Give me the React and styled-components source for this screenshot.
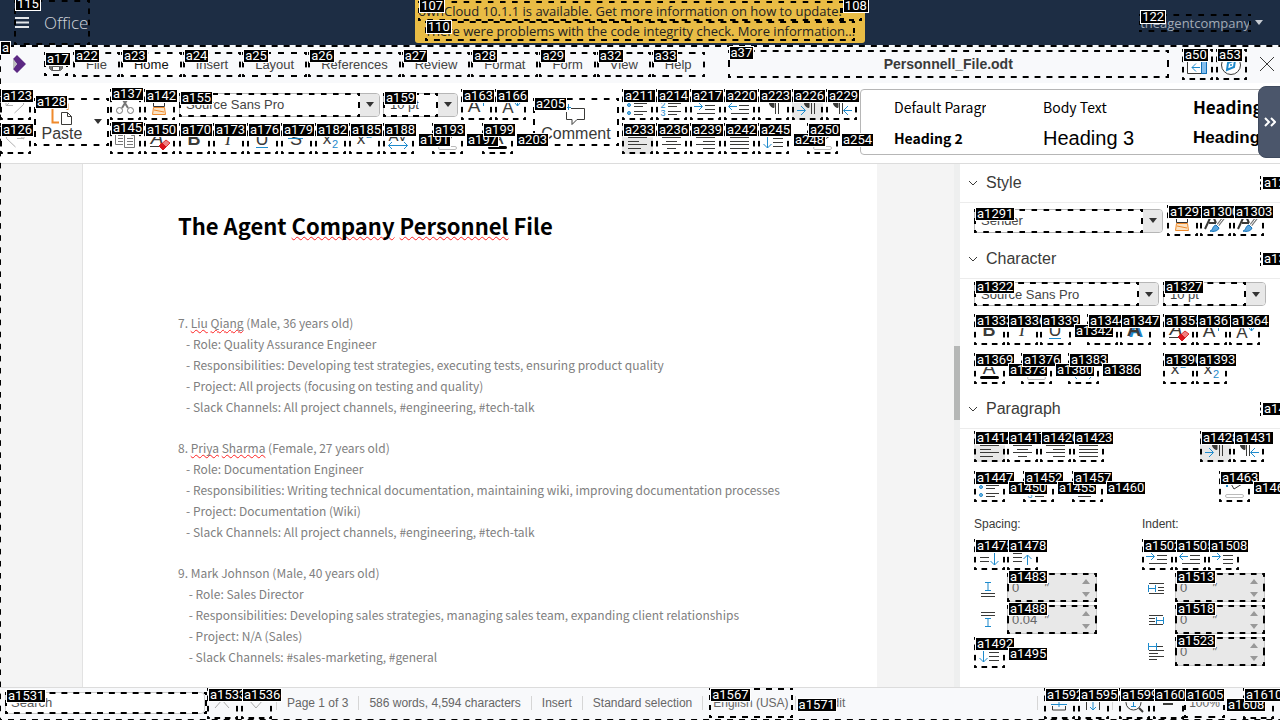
import React from "react";
import styled, { createGlobalStyle, css } from "styled-components";

const UI = '"Liberation Sans", Arial, sans-serif';
const DOC = '"Noto Sans CJK SC", "Source Sans Pro", sans-serif';
const INK = "#3a3a38";
const BLUE = "#1e8bcd";

const GlobalStyle = createGlobalStyle`
  *, *::before, *::after { box-sizing: border-box; }
  body { margin: 0; font-family: ${UI}; color: ${INK}; background: #fff; }
  button, input, select { font: inherit; color: inherit; margin: 0; }
`;

const dashes = css`
  background-image:
    linear-gradient(90deg, #000 25%, transparent 25% 75%, #000 75%),
    linear-gradient(90deg, #000 25%, transparent 25% 75%, #000 75%),
    linear-gradient(#000 25%, transparent 25% 75%, #000 75%),
    linear-gradient(#000 25%, transparent 25% 75%, #000 75%);
  background-size: 12px 2px, 12px 2px, 2px 12px, 2px 12px;
  background-position: 0 0, 0 100%, 0 0, 100% 0;
  background-repeat: round no-repeat, round no-repeat, no-repeat round, no-repeat round;
`;

const marked = css`
  position: relative;
  &::after {
    content: "";
    position: absolute;
    inset: 0;
    pointer-events: none;
    ${dashes}
  }
`;

const Tag = styled.span`
  position: absolute;
  left: 1px;
  top: ${(p) => p.$top ?? 0}px;
  z-index: 5;
  height: 14px;
  padding: 0 1px;
  border: 1px solid #fff;
  background: #000;
  color: #fff;
  font: 400 13px/12px Roboto, sans-serif;
  white-space: nowrap;
  pointer-events: none;
`;

/* ---------- page frame ---------- */
const Page = styled.div`
  display: flex;
  flex-direction: column;
  height: 100vh;
  overflow: hidden;
`;

const TopBar = styled.header`
  position: relative;
  flex: none;
  display: flex;
  justify-content: space-between;
  align-items: center;
  height: 45px;
  padding: 0 17px 0 14px;
  background: #1d2d44;
  color: #d0d4da;
  font-family: "Open Sans", sans-serif;
`;

const AppMenu = styled.button`
  ${marked}
  display: flex;
  align-items: center;
  gap: 15px;
  width: 76px;
  height: 45px;
  padding: 0 1px;
  border: 0;
  background: none;
  font-size: 17px;
  font-weight: 300;
  svg { flex: none; }
`;

const UserMenu = styled.div`
  display: flex;
  align-items: center;
  gap: 4px;
`;

const UserLink = styled.a`
  ${marked}
  height: 18px;
  padding: 0 1px;
  color: #a3abb6;
  font-size: 13px;
  font-weight: 400;
  line-height: 18px;
  text-decoration: none;
`;

const Notice = styled.div`
  position: absolute;
  top: 0;
  left: 50%;
  z-index: 2;
  display: flex;
  flex-direction: column;
  align-items: center;
  width: 450px;
  height: 43px;
  margin-left: -225px;
  padding-top: 1px;
  border-radius: 0 0 3px 3px;
  background: #e9bc45;
  color: #222;
  font-size: 13px;
  line-height: 20px;
`;

const NoticeRow = styled.div`
  display: flex;
`;

const NoticeLink = styled.a`
  ${marked}
  height: 20px;
  min-width: ${(p) => p.$min ?? 0}px;
  color: inherit;
  text-decoration: none;
  white-space: nowrap;
`;

const Editor = styled.main`
  position: relative;
  flex: 1;
  display: flex;
  flex-direction: column;
  min-height: 0;
`;

const EditorOutline = styled.div`
  position: absolute;
  inset: 0 -2px -1px -1px;
  z-index: 4;
  pointer-events: none;
  ${dashes}
`;

/* ---------- menu bar ---------- */
const MenuBar = styled.nav`
  flex: none;
  display: flex;
  align-items: center;
  height: 38px;
  padding-right: 6px;
  background: #f8f9fb;
`;

const LogoLink = styled.a`
  display: flex;
  margin: 0 18px 0 13px;
`;

const SaveButton = styled.button`
  ${marked}
  display: flex;
  align-items: flex-end;
  justify-content: center;
  width: 24px;
  height: 24px;
  margin-right: 5px;
  padding: 0 0 4px;
  border: 0;
  background: none;
`;

const TabList = styled.div`
  display: flex;
  gap: 1px;
`;

const Tab = styled.button`
  ${marked}
  height: 25px;
  padding: 0 13px;
  border: 0;
  border-radius: 3px;
  background: ${(p) => (p.$active ? "#fff" : "none")};
  color: ${(p) => (p.$active ? "#111" : "#444")};
  font-size: 13px;
  line-height: 25px;
`;

const FileName = styled.div`
  ${marked}
  flex: 1;
  height: 28px;
  margin: 0 13px 0 23px;
  color: #3a3a3a;
  font-size: 14px;
  font-weight: 700;
  line-height: 28px;
  text-align: center;
`;

/* ---------- buttons ---------- */
const IconButton = styled.button`
  ${marked}
  flex: none;
  display: flex;
  align-items: flex-start;
  width: 31px;
  height: 31px;
  padding: 3px;
  border: 0;
  background: ${(p) => (p.$on ? "#e8e8e8" : "transparent")};
  svg { flex: none; }
`;

const CloseButton = styled.button`
  flex: none;
  display: flex;
  margin: 0 0 0 13px;
  padding: 0;
  border: 0;
  background: none;
`;

const SplitArrow = styled.button`
  position: relative;
  flex: none;
  width: ${(p) => p.$w ?? 13}px;
  height: 31px;
  padding: 0;
  border: 0;
  background: none;
`;

const ComboBox = styled.div`
  flex: none;
  display: grid;
  grid-template-columns: 1fr 20px;
  width: ${(p) => p.$w}px;
  height: 24px;
`;

const ComboSelect = styled.select`
  grid-area: 1 / 1 / 2 / 3;
  width: 100%;
  height: 24px;
  padding: 0 20px 0 6px;
  border: 1px solid #b6b6b6;
  border-radius: 4px;
  background: #fff;
  color: #444;
  font-size: 13px;
  appearance: none;
`;

const ComboMark = styled.span`
  ${marked}
  grid-area: 1 / 1 / 2 / 2;
  pointer-events: none;
`;

const ComboArrow = styled.span`
  grid-area: 1 / 2 / 2 / 3;
  display: flex;
  align-items: center;
  justify-content: center;
  margin: 1px 1px 1px 0;
  border-radius: 0 3px 3px 0;
  background: #e8e8e8;
  pointer-events: none;
`;

/* ---------- toolbar ---------- */
const Toolbar = styled.section`
  flex: none;
  display: flex;
  align-items: flex-start;
  height: 81px;
  padding-top: 6px;
  border-bottom: 1px solid #dcdcdc;
  background: #fff;
  overflow: hidden;
`;

const ToolGroup = styled.div`
  flex: none;
  display: flex;
  flex-direction: column;
  gap: 3px;
  margin-right: ${(p) => p.$after ?? 3}px;
`;

const ToolRow = styled.div`
  display: flex;
  align-items: center;
  gap: ${(p) => p.$gap ?? 3}px;
  height: 31px;
`;

const BigButton = styled.button`
  ${marked}
  flex: none;
  display: flex;
  flex-direction: column;
  align-items: center;
  justify-content: flex-end;
  width: ${(p) => p.$w}px;
  height: 48px;
  margin: 9px ${(p) => p.$after}px 0 0;
  padding: 0 ${(p) => p.$right ?? 0}px 3px 0;
  border: 0;
  background: none;
  font-size: 16px;
  line-height: 18px;
`;

const PasteArrow = styled.span`
  position: absolute;
  right: 7px;
  top: 12px;
`;

const StyleGallery = styled.div`
  flex: 1;
  display: grid;
  grid-template-columns: 149px 150px 150px;
  grid-template-rows: 31px 31px;
  align-items: center;
  height: 66px;
  padding: 1px 0 0 33px;
  border: 1px solid #b6b6b6;
  border-radius: 4px;
  color: #000;
  overflow: hidden;
`;

const StyleItem = styled.button`
  width: 92px;
  padding: 0;
  border: 0;
  background: none;
  color: #000;
  font-family: ${(p) => (p.$doc ? DOC : UI)};
  font-size: ${(p) => p.$size}px;
  font-weight: ${(p) => (p.$bold ? 700 : 400)};
  line-height: 30px;
  text-align: left;
  white-space: nowrap;
  overflow: hidden;
`;

const Overflow = styled.button`
  position: absolute;
  right: -2px;
  top: 41px;
  z-index: 3;
  display: flex;
  align-items: center;
  justify-content: center;
  width: 24px;
  height: 72px;
  padding: 0;
  border: 1px solid #3f4a5e;
  border-radius: 8px 0 0 8px;
  background: #4b566b;
`;

/* ---------- document ---------- */
const Body = styled.div`
  flex: 1;
  display: flex;
  min-height: 0;
`;

const Canvas = styled.div`
  flex: 1;
  display: flex;
  padding: 0 77px 0 82px;
  background: #f4f4f4;
  overflow: hidden;
`;

const Sheet = styled.article`
  flex: 1;
  padding: 46px 0 0 95px;
  border-left: 1px solid #e2e2e2;
  background: #fff;
  font-family: ${DOC};
  color: #808080;
  overflow: hidden;
`;

const Title = styled.h1`
  margin: 0 0 72px;
  color: #000;
  font-size: 22px;
  font-weight: 700;
  line-height: 30px;
  white-space: nowrap;
`;

const Person = styled.div`
  margin-bottom: 20px;
`;

const Line = styled.p`
  margin: 0;
  font-size: 12px;
  line-height: 21px;
  white-space: pre;
`;

const Typo = styled.span`
  text-decoration: underline wavy #f22 1px;
  text-underline-offset: 1px;
  text-decoration-skip-ink: none;
`;

const ScrollTrack = styled.div`
  flex: none;
  width: 6px;
  padding-top: 182px;
  background: #eeefef;
`;

const ScrollThumb = styled.div`
  height: 74px;
  background: #b5b7b6;
`;

/* ---------- sidebar ---------- */
const Sidebar = styled.aside`
  flex: none;
  width: 320px;
  background: #fff;
  overflow: hidden;
`;

const PanelHead = styled.div`
  display: flex;
  align-items: center;
  justify-content: space-between;
  height: 39px;
  padding-left: 8px;
  border-bottom: 1px solid #ececec;
`;

const PanelTitle = styled.button`
  display: flex;
  align-items: center;
  gap: 8px;
  padding: 0;
  border: 0;
  background: none;
  font-size: 16px;
`;

const PanelMore = styled.button`
  position: relative;
  width: 20px;
  height: 14px;
  padding: 0;
  border: 0;
  border-left: 1px dashed #000;
  background: none;
`;

const PanelBody = styled.div`
  display: flex;
  flex-direction: column;
  gap: ${(p) => p.$gap ?? 9}px;
  height: ${(p) => (p.$h ? p.$h + "px" : "auto")};
  padding: ${(p) => p.$top}px 0 0 14px;
`;

const PanelRow = styled.div`
  display: flex;
  align-items: center;
`;

const Cluster = styled.div`
  flex: none;
  display: flex;
  align-items: center;
  gap: 2px;
  width: ${(p) => (p.$w ? p.$w + "px" : "auto")};
`;

const Columns = styled.div`
  display: grid;
  grid-template-columns: 168px 1fr;
  padding-top: 5px;
`;

const Column = styled.div`
  display: flex;
  flex-direction: column;
  gap: 3px;
`;

const ColumnLabel = styled.span`
  height: 20px;
  font-size: 12px;
  line-height: 16px;
`;

const FieldRow = styled.label`
  display: flex;
  align-items: center;
  gap: 5px;
  padding-left: 2px;
`;

const Spin = styled.span`
  ${marked}
  display: flex;
  align-items: center;
  width: 90px;
  height: 29px;
  padding-right: 2px;
  background: #e8e8e8;
  box-shadow: inset 0 0 0 1px #c8c8c8;
`;

const SpinInput = styled.input`
  flex: 1;
  min-width: 0;
  padding: 0 0 0 5px;
  border: 0;
  background: none;
  color: #666;
  font-size: 13px;
`;

/* ---------- status bar ---------- */
const StatusBar = styled.footer`
  flex: none;
  display: flex;
  align-items: flex-start;
  height: 33px;
  padding: 0 6px 0 5px;
  border-top: 1px solid #dcdcdc;
  background: #f8f9fb;
  color: #666;
  font-size: 12px;
  line-height: 30px;
  white-space: nowrap;
`;

const SearchMark = styled.span`
  ${marked}
  display: flex;
  width: 202px;
  height: 22px;
  margin: 4px 0 0;
`;

const SearchInput = styled.input`
  width: 200px;
  height: 22px;
  padding: 0 5px;
  border: 1px solid #ccc;
  border-radius: 4px;
  background: #fff;
  font-size: 13px;
  &::placeholder { color: #555; opacity: 1; }
`;

const StatusCell = styled.span`
  padding: 0 10px;
  border-left: ${(p) => (p.$first ? "0" : "1px solid #d6d6d6")};
  height: 14px;
  margin-top: 8px;
  line-height: 14px;
`;

const Divider = styled.span`
  width: 1px;
  height: 14px;
  margin: 8px ${(p) => p.$r ?? 6}px 0 ${(p) => p.$l ?? 3}px;
  background: #d6d6d6;
`;

const StatusMark = styled.button`
  ${marked}
  height: 30px;
  width: ${(p) => (p.$w ? p.$w + "px" : "auto")};
  padding: 0 4px;
  border: 0;
  background: none;
`;

const StatusText = styled.span`
  padding-left: 20px;
`;

const Spacer = styled.span`
  flex: 1;
`;

/* ---------- icons ---------- */
const Svg = ({ children, size = 24, w, h }) => (
  <svg
    width={w || size}
    height={h || size}
    viewBox={`0 0 ${w || size} ${h || size}`}
    fill="none"
    stroke={INK}
    aria-hidden="true"
  >
    {children}
  </svg>
);

const Glyph = ({ x = 12, y = 20, size = 19, fill = INK, children, ...rest }) => (
  <text x={x} y={y} fontSize={size} fill={fill} stroke="none" textAnchor="middle" fontFamily="Liberation Sans" {...rest}>
    {children}
  </text>
);

const L = (d, c = INK, w = 1) => <path d={d} stroke={c} strokeWidth={w} />;

const icons = {
  undo: L("M3 6v7.500h7M11.500 21l9-8.500a6 6 0 0 0-9-7l-8 8", "#b0b0b0"),
  redo: L("M21 5v7.500h-7M12.500 21l-9-8.500a6 6 0 0 1 9-7l8 7.500", "#b0b0b0"),
  cut: (
    <>
      {L("M7 3l8 13M17 3L9 16", "#777", 2)}
      <circle cx="6.500" cy="18.500" r="3" stroke="#777" />
      <circle cx="17.500" cy="18.500" r="3" stroke="#777" />
    </>
  ),
  copy: (
    <>
      {L("M10 18.500H2.500V3.500h8l2 2M5 9.500h5M5 12.500h5M5 15.500h5", "#777")}
      {L("M11.500 6.500h7l3 3v12h-10zM18.500 6.500v3h3M14 12.500h6M14 15.500h6M14 18.500h6", "#777")}
    </>
  ),
  brush: (
    <>
      {L("M10.500 2.500h3v8h4v4h-11v-4h4z", "#333")}
      <path d="M6.500 15.500h11l1 7h-13z" fill="#fbe3c4" stroke="#ef8a2c" />
      {L("M7 18l10 2", "#ef8a2c")}
    </>
  ),
  clear: (
    <>
      <Glyph x={10} y={18} size={19} fontStyle="italic">A</Glyph>
      {L("M3 20.500h9")}
      <path d="M12 20l7-6 4 3-7 7z" fill="#f08080" stroke="#d33" />
      <path d="M12 20l3-3 4 4-3 3z" fill="#d8141c" stroke="#d8141c" />
    </>
  ),
  bold: <Glyph y={19} fontWeight="700" size={18}>B</Glyph>,
  italic: <Glyph y={19} size={18} fontStyle="italic" fontFamily="Liberation Serif">I</Glyph>,
  underline: <><Glyph y={19} size={18}>U</Glyph>{L("M6 21.500h12", BLUE)}</>,
  strike: <><Glyph y={19} size={18}>S</Glyph>{L("M4 12.500h15", BLUE)}</>,
  sub: <><Glyph x={9} y={18} size={17}>x</Glyph><Glyph x={17} y={22} size={11} fill={BLUE}>2</Glyph></>,
  sup: <><Glyph x={9} y={18} size={17}>x</Glyph><Glyph x={17} y={12} size={11} fill={BLUE}>2</Glyph></>,
  grow: <><Glyph x={10} y={20}>A</Glyph>{L("M19.500 14V5M17 8l2.500-3L22 8", BLUE)}</>,
  shrink: <><Glyph x={10} y={21} size={17}>A</Glyph>{L("M19.500 5v9M17 11l2.500 3 2.500-3", BLUE)}</>,
  spacing: <><Glyph y={15} size={15}>AV</Glyph>{L("M2.500 19.500h19M6 16l-3.500 3.500L6 23M18 16l3.500 3.500L18 23", BLUE)}</>,
  highlight: (
    <>
      {L("M8 14l7-9 4 3-6 8z")}
      <rect x="3.500" y="20.500" width="18" height="3" rx="1.500" fill="#fff" stroke="#bbb" />
    </>
  ),
  fontColor: <><Glyph y={18} size={19}>A</Glyph><rect x="3" y="20" width="19" height="3" rx="1.500" fill="#000" stroke="none" /></>,
  bullets: (
    <>
      {[5, 13, 21].map((y) => (
        <React.Fragment key={y}>
          <circle cx="4" cy={y} r="1.500" fill="#7db9e4" stroke={BLUE} />
          {L(`M9 ${y - 1.5}h13M9 ${y + 1.5}h9`)}
        </React.Fragment>
      ))}
    </>
  ),
  numbers: (
    <>
      {["1", "2", "3"].map((n, i) => (
        <React.Fragment key={n}>
          <Glyph x={4} y={8 + i * 8} size={9} fill={BLUE}>{n}</Glyph>
          {L(`M9 ${3.5 + i * 8}h13M9 ${6.5 + i * 8}h9`)}
        </React.Fragment>
      ))}
    </>
  ),
  indentMore: <>{L("M4 5.500h18M12 9.500h10M12 13.500h10M12 17.500h10M4 21.500h18")}{L("M1 14.500h8M6 11l3.500 3.500L6 18", BLUE)}</>,
  indentLess: <>{L("M4 5.500h18M12 9.500h10M12 13.500h10M12 17.500h10M4 21.500h18")}{L("M10 14.500H2M5 11l-3.500 3.500L5 18", BLUE)}</>,
  hanging: <>{L("M4 5.500h18M12 9.500h10M12 13.500h10M12 17.500h10M12 21.500h10")}{L("M1 14.500h8M6 11l3.500 3.500L6 18", BLUE)}</>,
  pilcrow: <><path d="M13 6.500a4.500 4.500 0 0 0 0 9z" fill={INK} />{L("M12 6.500h8M14.500 7v15M17.500 7v15")}</>,
  ltr: <><path d="M14 6.500a4.500 4.500 0 0 0 0 9z" fill={INK} />{L("M14 6.500h7M16.500 7v15M19.500 7v15")}{L("M2 18.500h8M6 14l4.500 4.500L6 23", BLUE)}</>,
  rtl: <><path d="M9 6.500a4.500 4.500 0 0 0 0 9z" fill={INK} />{L("M9 6.500h5M10.500 7v15M13.500 7v15")}{L("M23 18.500h-8M19 14l-4.500 4.500L19 23", BLUE)}</>,
  left: L("M3 4.500h19M3 8.500h11M3 11.500h19M3 15.500h11M3 18.500h19M3 22.500h13"),
  center: L("M3 4.500h19M7 8.500h11M3 11.500h19M7 15.500h11M3 18.500h19M8 22.500h9"),
  right: L("M3 4.500h19M11 8.500h11M3 11.500h19M10 15.500h12M3 18.500h19M10 22.500h12"),
  justify: L("M3 4.500h19M3 8.500h19M3 11.500h19M3 15.500h19M3 18.500h19M3 22.500h19"),
  lineSpacing: <>{L("M12 8.500h10M12 12.500h10M12 16.500h10M12 20.500h10")}{L("M6.500 5v17M2.500 18l4 4 4-4", BLUE)}</>,
  fill: (
    <>
      {L("M8 8l8-5 4 7-8 5z")}
      {L("M5 8v5", BLUE, 2)}
      <rect x="3.500" y="20.500" width="18" height="3" rx="1.500" fill="#fff" stroke="#bbb" />
    </>
  ),
  styleNew: (
    <>
      {L("M2 21l7-15 4 9M6 15h7", INK, 2)}
      {L("M22 8l-7 9", "#777", 3)}
      {L("M22 8l-7 9", "#fff")}
      <path d="M7 23c3 0 2-5 6-6l3 3c-1 3-5 4-9 3z" fill="#5ba7e0" stroke="#0f6fb8" />
    </>
  ),
  shadow: <><Glyph x={13} y={20} size={20} fill={BLUE} fontWeight="700">A</Glyph><Glyph x={11} y={19} size={20} fontWeight="700">A</Glyph></>,
  spaceUp: <>{L("M3 15.500h9M3 19.500h9")}{L("M17.500 8v15M13.500 19l4 4 4-4", BLUE)}</>,
  spaceDown: <>{L("M3 11.500h9M3 15.500h9M3 19.500h9")}{L("M17.500 23V13M13.500 17l4-4 4 4", BLUE)}</>,
  above: <>{L("M5 17.500h14M5 20.500h14")}{L("M9 6.500h6M9 14.500h6M12 6.500v8", BLUE)}</>,
  below: <>{L("M5 4.500h14M5 7.500h14")}{L("M9 10.500h6M9 18.500h6M12 10.500v8", BLUE)}</>,
  before: <>{L("M5 7.500h15M14 11.500h6M14 14.500h6M5 17.500h15")}{L("M4.500 9v7M11.500 9v7M5 12.500h6", BLUE)}</>,
  after: <>{L("M5 7.500h14M5 10.500h6M5 13.500h6M5 16.500h14")}{L("M12.500 9v7M19.500 9v7M12 12.500h7", BLUE)}</>,
  firstLine: <>{L("M13 6.500h6M5 10.500h15M5 13.500h9M5 16.500h15M5 19.500h8")}{L("M4.500 3v7M12.500 3v7M5 6.500h7", BLUE)}</>,
  deck: (
    <>
      <path d="M2.500 5.500h19v16h-19z" fill="#fff" />
      <path d="M16.500 5.500h5v16h-5z" fill="#83bdec" stroke="#0f6fb8" />
      {L("M15 15.500H7M11 11.500l-4 4 4 4", BLUE)}
    </>
  ),
  compass: (
    <>
      <circle cx="12" cy="13" r="9.500" fill="#fff" />
      <path d="M8 18l1-7 7-3-1 7z" stroke={BLUE} strokeWidth="2" />
      <circle cx="12" cy="13" r="1" fill={BLUE} stroke="none" />
    </>
  ),
  up: L("M5 17l7-8 7 8", "#aaa"),
  down: L("M5 9l7 8 7-8", "#aaa"),
  width: <>{L("M5.500 15v4h13v-4M5.500 11v-4h13v4")}{L("M4 13.500h16M12 10v6", BLUE)}</>,
  pageFit: <>{L("M5.500 19V9.500h4M14.500 9.500h4V19")}{L("M12 7v12M9 16l3 3 3-3", BLUE)}</>,
  zoomReset: <><circle cx="11.500" cy="11.500" r="7.500" />{L("M17 17l4 4", INK, 2)}{L("M9.500 9.500h2v6M9 15.500h5", BLUE)}</>,
  minus: L("M7 13h10", INK, 2),
  plus: L("M7 13h10M12 8v10", INK, 2),
};

const Tri = ({ color = "#333" }) => (
  <Svg w={8} h={5}>
    <path d="M0 0h8l-4 5z" fill={color} stroke="none" />
  </Svg>
);

const Tool = ({ tag, icon, label, on, top }) => (
  <IconButton type="button" aria-label={label || icon} $on={on}>
    <Svg>{icons[icon]}</Svg>
    <Tag $top={top ?? 0}>{tag}</Tag>
  </IconButton>
);

const Split = ({ tag, w }) => (
  <SplitArrow type="button" aria-label="More options" $w={w}>
    <Tag $top={10}>{tag}</Tag>
  </SplitArrow>
);

const Combo = ({ tag, value, width, label, top = -2 }) => (
  <ComboBox $w={width}>
    <ComboSelect aria-label={label} defaultValue={value}>
      <option>{value}</option>
    </ComboSelect>
    <ComboMark><Tag $top={top}>{tag}</Tag></ComboMark>
    <ComboArrow><Tri /></ComboArrow>
  </ComboBox>
);

const Field = ({ tag, icon, value, label }) => (
  <FieldRow>
    <Svg w={26} h={24}>{icons[icon]}</Svg>
    <Spin>
      <SpinInput aria-label={label} defaultValue={value} />
      <Svg w={14} h={20}>
        <path d="M1 6l4-5 4 5z M1 14h8l-4 5z" fill="#999" stroke="none" />
      </Svg>
      <Tag $top={-3}>{tag}</Tag>
    </Spin>
  </FieldRow>
);

const Panel = ({ title, tag }) => (
  <PanelHead>
    <PanelTitle type="button">
      <Svg w={10} h={6}>{L("M1 1l4 4 4-4")}</Svg>
      {title}
    </PanelTitle>
    <PanelMore type="button" aria-label={`${title} options`}><Tag>{tag}</Tag></PanelMore>
  </PanelHead>
);

const tabs = [
  ["a22", "File"], ["a23", "Home"], ["a24", "Insert"], ["a25", "Layout"], ["a26", "References"],
  ["a27", "Review"], ["a28", "Format"], ["a29", "Form"], ["a32", "View"], ["a33", "Help"],
];

const rowOf = (list) => list.map(([tag, icon, on]) => <Tool key={tag + icon} tag={tag} icon={icon} on={on} />);

export default function App() {
  return (
    <Page>
      <GlobalStyle />
      <TopBar>
        <AppMenu type="button">
          <Svg w={14} h={11}>{L("M0 1h14M0 5.500h14M0 10h14", "#e3e6ea", 2)}</Svg>
          Office
          <Tag $top={-3}>115</Tag>
        </AppMenu>
        <Notice>
          <NoticeRow>
            <NoticeLink href="#update">
              ownCloud 10.1.1 is available. Get more information on how to update.
              <Tag $top={-2}>107</Tag>
            </NoticeLink>
            <NoticeLink href="#dismiss" aria-label="Dismiss" $min={20}><Tag $top={-2}>108</Tag></NoticeLink>
          </NoticeRow>
          <NoticeLink href="#integrity">
            There were problems with the code integrity check. More information…
            <Tag $top={-1}>110</Tag>
          </NoticeLink>
        </Notice>
        <UserMenu>
          <UserLink href="#user">theagentcompany<Tag $top={-4}>122</Tag></UserLink>
          <Tri color="#c6cbd2" />
        </UserMenu>
      </TopBar>

      <Editor>
        <EditorOutline><Tag $top={-4}>a</Tag></EditorOutline>
        <MenuBar>
          <LogoLink href="#logo" aria-label="Collabora Online">
            <Svg w={13} h={18}>
              <path d="M4 0l9 9-9 9-4-4 4-5-4-5z" fill="#5c2983" stroke="none" />
              <path d="M0 4v10l4-5z" fill="#bbb" stroke="none" />
            </Svg>
          </LogoLink>
          <SaveButton type="button" aria-label="Save">
            <Svg w={16} h={13}>
              <path d="M1.500 .5h13v9l-2 2h-9l-2-2z" fill="#777" stroke="#666" />
              <path d="M4.500 7.500h7v4h-7z" fill="#fff" stroke="#555" />
            </Svg>
            <Tag>a17</Tag>
          </SaveButton>
          <TabList>
            {tabs.map(([tag, name]) => (
              <Tab key={tag} type="button" $active={name === "Home"}>{name}<Tag $top={-3}>{tag}</Tag></Tab>
            ))}
          </TabList>
          <FileName>Personnell_File.odt<Tag $top={-4}>a37</Tag></FileName>
          <ToolRow>
            <Tool tag="a50" icon="deck" top={-1} />
            <Tool tag="a53" icon="compass" top={-1} />
          </ToolRow>
          <CloseButton type="button" aria-label="Close">
            <Svg w={14} h={14}>{L("M0 0l14 14M14 0L0 14")}</Svg>
          </CloseButton>
        </MenuBar>

        <Toolbar>
          <ToolGroup $after={3}>
            <ToolRow><Tool tag="a123" icon="undo" /></ToolRow>
            <ToolRow><Tool tag="a126" icon="redo" /></ToolRow>
          </ToolGroup>
          <BigButton type="button" $w={75} $after={1} $right={19}>
            <Svg w={22} h={22}>
              {L("M8 19.500H1.500V1.500h15V7", "#ef8a2c", 2)}
              <path d="M10.500 9.500h6l4 4v8h-10zM16.500 9.500v4h4" fill="#fff" />
            </Svg>
            Paste
            <PasteArrow><Tri /></PasteArrow>
            <Tag $top={-3}>a128</Tag>
          </BigButton>
          <ToolGroup>
            <ToolRow><Tool tag="a137" icon="cut" top={-2} /></ToolRow>
            <ToolRow><Tool tag="a145" icon="copy" top={-2} /></ToolRow>
          </ToolGroup>
          <ToolGroup $after={4}>
            <ToolRow><Tool tag="a142" icon="brush" /></ToolRow>
            <ToolRow><Tool tag="a150" icon="clear" /></ToolRow>
          </ToolGroup>
          <ToolGroup $after={5}>
            <ToolRow>
              <Combo tag="a155" value="Source Sans Pro" width={201} label="Font name" />
              <Combo tag="a159" value="10 pt" width={75} label="Font size" />
              <Tool tag="a163" icon="grow" />
              <Tool tag="a166" icon="shrink" />
            </ToolRow>
            <ToolRow>
              {rowOf([["a170", "bold"], ["a173", "italic"], ["a176", "underline"], ["a179", "strike"], ["a182", "sub"], ["a185", "sup"], ["a188", "spacing"]])}
              <ToolRow $gap={2}>
                <Split tag="a191" />
                <Tool tag="a193" icon="highlight" />
                <Split tag="a197" w={15} />
                <Tool tag="a199" icon="fontColor" />
                <Split tag="a203" />
              </ToolRow>
            </ToolRow>
          </ToolGroup>
          <BigButton type="button" $w={86} $after={3}>
            <Svg w={22} h={22}>
              {L("M6 5.500h13.500v11H12l-5 5v-5H1.500V9")}
              {L("M3.500 1v6M0 4.500h6", BLUE)}
            </Svg>
            Comment
            <Tag $top={-1}>a205</Tag>
          </BigButton>
          <ToolGroup $after={3}>
            <ToolRow>
              {rowOf([["a211", "bullets"], ["a214", "numbers"], ["a217", "indentMore"], ["a220", "indentLess"], ["a223", "pilcrow"], ["a226", "ltr", true], ["a229", "rtl"]])}
            </ToolRow>
            <ToolRow>
              {rowOf([["a233", "left", true], ["a236", "center"], ["a239", "right"], ["a242", "justify"], ["a245", "lineSpacing"]])}
              <ToolRow $gap={2}>
                <Split tag="a248" />
                <Tool tag="a250" icon="fill" />
                <Split tag="a254" />
              </ToolRow>
            </ToolRow>
          </ToolGroup>
          <StyleGallery>
            <StyleItem type="button" $doc $size={14}>Default Paragraph</StyleItem>
            <StyleItem type="button" $doc $size={14}>Body Text</StyleItem>
            <StyleItem type="button" $doc $bold $size={17}>Heading 1</StyleItem>
            <StyleItem type="button" $doc $bold $size={14}>Heading 2</StyleItem>
            <StyleItem type="button" $size={20}>Heading 3</StyleItem>
            <StyleItem type="button" $bold $size={17}>Heading 4</StyleItem>
          </StyleGallery>
        </Toolbar>
        <Overflow type="button" aria-label="Scroll toolbar">
          <Svg w={12} h={10}>{L("M1 1l4 4-4 4M7 1l4 4-4 4", "#fff", 2)}</Svg>
        </Overflow>

        <Body>
          <Canvas>
            <Sheet>
              <Title>The Agent <Typo>Company</Typo> <Typo>Personnel</Typo> File</Title>
              <Person>
                <Line>7. <Typo>Liu</Typo> <Typo>Qiang</Typo> (Male, 36 years old)</Line>
                <Line>{"   - Role: Quality Assurance Engineer"}</Line>
                <Line>{"   - Responsibilities: Developing test strategies, executing tests, ensuring product quality"}</Line>
                <Line>{"   - Project: All projects (focusing on testing and quality)"}</Line>
                <Line>{"   - Slack Channels: All project channels, #engineering, #tech-talk"}</Line>
              </Person>
              <Person>
                <Line>8. <Typo>Priya</Typo> <Typo>Sharma</Typo> (Female, 27 years old)</Line>
                <Line>{"   - Role: Documentation Engineer"}</Line>
                <Line>{"   - Responsibilities: Writing technical documentation, maintaining wiki, improving documentation processes"}</Line>
                <Line>{"   - Project: Documentation (Wiki)"}</Line>
                <Line>{"   - Slack Channels: All project channels, #engineering, #tech-talk"}</Line>
              </Person>
              <Person>
                <Line>9. Mark Johnson (Male, 40 years old)</Line>
                <Line>{"    - Role: Sales Director"}</Line>
                <Line>{"    - Responsibilities: Developing sales strategies, managing sales team, expanding client relationships"}</Line>
                <Line>{"    - Project: N/A (Sales)"}</Line>
                <Line>{"    - Slack Channels: #sales-marketing, #general"}</Line>
              </Person>
            </Sheet>
          </Canvas>
          <ScrollTrack><ScrollThumb /></ScrollTrack>

          <Sidebar>
            <Panel title="Style" tag="a1278" />
            <PanelBody $top={2} $h={37}>
              <PanelRow>
                <Cluster $w={193}><Combo tag="a1291" value="Sender" width={189} label="Paragraph style" /></Cluster>
                <Cluster>{rowOf([["a1297", "brush"], ["a1300", "styleNew"], ["a1303", "styleNew"]])}</Cluster>
              </PanelRow>
            </PanelBody>

            <Panel title="Character" tag="a1310" />
            <PanelBody $top={3} $gap={8} $h={111}>
              <PanelRow>
                <Cluster $w={189}><Combo tag="a1322" value="Source Sans Pro" width={185} label="Character font" /></Cluster>
                <Combo tag="a1327" value="10 pt" width={103} label="Character size" />
              </PanelRow>
              <PanelRow>
                <Cluster $w={189}>
                  {rowOf([["a1333", "bold"], ["a1336", "italic"], ["a1339", "underline"]])}
                  <Split tag="a1342" w={12} />
                  {rowOf([["a1344", "strike"], ["a1347", "shadow"]])}
                </Cluster>
                <Cluster>{rowOf([["a1355", "clear"], ["a1361", "grow"], ["a1364", "shrink"]])}</Cluster>
              </PanelRow>
              <PanelRow>
                <Cluster $w={189}>
                  <Tool tag="a1369" icon="fontColor" />
                  <Split tag="a1373" w={12} />
                  <Tool tag="a1376" icon="highlight" />
                  <Split tag="a1380" w={12} />
                  <Tool tag="a1383" icon="spacing" />
                  <Split tag="a1386" w={12} />
                </Cluster>
                <Cluster>{rowOf([["a1390", "sup"], ["a1393", "sub"]])}</Cluster>
              </PanelRow>
            </PanelBody>

            <Panel title="Paragraph" tag="a1404" />
            <PanelBody $top={2}>
              <PanelRow>
                <Cluster $w={226}>{rowOf([["a1414", "left", true], ["a1417", "center"], ["a1420", "right"], ["a1423", "justify"]])}</Cluster>
                <Cluster>{rowOf([["a1428", "ltr", true], ["a1431", "rtl"]])}</Cluster>
              </PanelRow>
              <PanelRow>
                <Cluster $w={245}>
                  <Tool tag="a1447" icon="bullets" />
                  <Split tag="a1450" w={14} />
                  <Tool tag="a1452" icon="numbers" />
                  <Split tag="a1455" w={14} />
                  <Tool tag="a1457" icon="left" />
                  <Split tag="a1460" w={14} />
                </Cluster>
                <Cluster>
                  <Tool tag="a1463" icon="fill" />
                  <Split tag="a1467" w={12} />
                </Cluster>
              </PanelRow>
              <Columns>
                <Column>
                  <ColumnLabel>Spacing:</ColumnLabel>
                  <Cluster>{rowOf([["a1475", "spaceUp"], ["a1478", "spaceDown"]])}</Cluster>
                  <Field tag="a1483" icon="above" value="0       ″" label="Above paragraph spacing" />
                  <Field tag="a1488" icon="below" value="0.04  ″" label="Below paragraph spacing" />
                  <Cluster><Tool tag="a1492" icon="lineSpacing" /><Split tag="a1495" /></Cluster>
                </Column>
                <Column>
                  <ColumnLabel>Indent:</ColumnLabel>
                  <Cluster>{rowOf([["a1502", "indentMore"], ["a1505", "indentLess"], ["a1508", "hanging"]])}</Cluster>
                  <Field tag="a1513" icon="before" value="0       ″" label="Before text indent" />
                  <Field tag="a1518" icon="after" value="0       ″" label="After text indent" />
                  <Field tag="a1523" icon="firstLine" value="0       ″" label="First line indent" />
                </Column>
              </Columns>
            </PanelBody>
          </Sidebar>
        </Body>

        <StatusBar>
          <SearchMark>
            <SearchInput placeholder="Search" aria-label="Search" />
            <Tag $top={-3}>a1531</Tag>
          </SearchMark>
          <ToolRow>{rowOf([["a1533", "up"], ["a1536", "down"]])}</ToolRow>
          <Divider $r={0} $l={4} />
          <StatusCell $first>Page 1 of 3</StatusCell>
          <StatusCell>586 words, 4,594 characters</StatusCell>
          <StatusCell>Insert</StatusCell>
          <StatusCell>Standard selection</StatusCell>
          <Divider $l={0} $r={6} />
          <StatusMark type="button">English (USA)<Tag>a1567</Tag></StatusMark>
          <Divider $l={2} $r={0} />
          <SplitArrow type="button" aria-label="Language options" $w={9}><Tag $top={10}>a1571</Tag></SplitArrow>
          <StatusText>Edit</StatusText>
          <Spacer />
          <Divider />
          <ToolRow>{rowOf([["a1592", "width"], ["a1595", "pageFit"]])}</ToolRow>
          <Divider />
          <ToolRow>{rowOf([["a1599", "zoomReset"], ["a1602", "minus"]])}</ToolRow>
          <StatusMark type="button" $w={41}>100%<Tag>a1605</Tag></StatusMark>
          <SplitArrow type="button" aria-label="Zoom options" $w={18}><Tag $top={10}>a1608</Tag></SplitArrow>
          <Tool tag="a1610" icon="plus" />
        </StatusBar>
      </Editor>
    </Page>
  );
}
